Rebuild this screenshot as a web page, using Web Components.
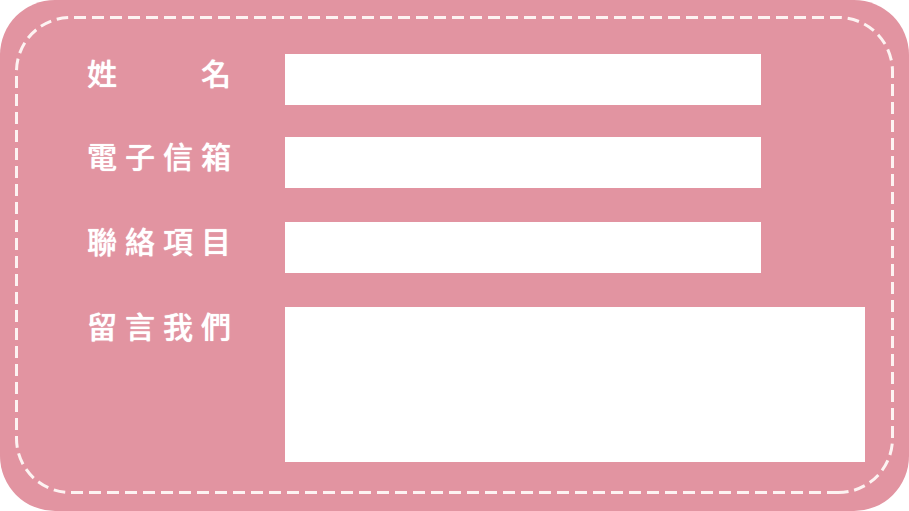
<!DOCTYPE html>
<html lang="zh-Hant">
<head>
<meta charset="utf-8">
<meta name="viewport" content="width=device-width, initial-scale=1">
<title>聯絡我們</title>
<style>
  body {
    margin: 0;
    background: #fff;
    color: #fff;
    font-family: "Noto Sans CJK TC", "Noto Sans", sans-serif;
  }
</style>
</head>
<body>
<contact-card>
  <field-group>
    <form-field label="姓 名" name="name"></form-field>
    <form-field label="電子信箱" name="email" type="email"></form-field>
  </field-group>
  <form-field label="聯絡項目" name="subject"></form-field>
  <form-field label="留言我們" name="message" multiline></form-field>
</contact-card>

<template id="contact-card">
  <style>
    :host {
      display: block;
      position: relative;
      box-sizing: border-box;
      padding: 54px 44px 49px 87px;
      border-radius: 55px;
      background: #e294a1;
    }
    stitched-border { position: absolute; inset: 16px 15px 17px; }
    form { position: relative; display: flex; flex-direction: column; gap: 34px; margin: 0; }
  </style>
  <stitched-border></stitched-border>
  <form><slot></slot></form>
</template>

<!-- Four straight runs of stitches between four curved corners, 12px stitch and 6px gap. -->
<template id="stitched-border">
  <style>
    :host {
      --thread: #fdf3f2;
      display: grid;
      grid-template: 56px 1fr 56px / 56px 1fr 56px;
      pointer-events: none;
    }
    svg { display: block; width: 56px; height: 56px; }
    path { fill: none; stroke: var(--thread); stroke-width: 3px; stroke-dasharray: 12 6; }
    .top { background: repeating-linear-gradient(90deg, transparent 0 3px, var(--thread) 3px 15px, transparent 15px 18px) top / 100% 3px no-repeat; }
    .bottom { background: repeating-linear-gradient(90deg, var(--thread) 0 12px, transparent 12px 18px) bottom / 100% 3px no-repeat; }
    .left { background: repeating-linear-gradient(180deg, transparent 0 4px, var(--thread) 4px 16px, transparent 16px 18px) left / 3px 100% no-repeat; }
    .right { background: repeating-linear-gradient(180deg, var(--thread) 0 6px, transparent 6px 12px, var(--thread) 12px 18px) right / 3px 100% no-repeat; }
  </style>
  <svg viewBox="0 0 56 56" aria-hidden="true"><path pathLength="89" stroke-dashoffset="16" d="M1.5 56V55.5A54 54 0 0 1 55.5 1.5H56"/></svg>
  <div class="top"></div>
  <svg viewBox="0 0 56 56" aria-hidden="true"><path pathLength="88" stroke-dashoffset="8" d="M0 1.5H.5A54 54 0 0 1 54.5 55.5V56"/></svg>
  <div class="left"></div>
  <div></div>
  <div class="right"></div>
  <svg viewBox="0 0 56 56" aria-hidden="true"><path pathLength="88" stroke-dashoffset="12" d="M56 54.5H55.5A54 54 0 0 1 1.5 .5V0"/></svg>
  <div class="bottom"></div>
  <svg viewBox="0 0 56 56" aria-hidden="true"><path pathLength="89" stroke-dashoffset="12" d="M54.5 0V.5A54 54 0 0 1 .5 54.5H0"/></svg>
</template>

<template id="field-group">
  <style>
    :host { display: flex; flex-direction: column; gap: 32px; }
  </style>
  <slot></slot>
</template>

<template id="form-field">
  <style>
    :host { display: grid; grid-template-columns: 144px minmax(0, 1fr); column-gap: 54px; align-items: start; }
    label {
      font-size: 30px;
      font-weight: 500;
      text-shadow: 0 0 1px currentColor;
      line-height: 36px;
      text-align: justify;
      text-align-last: justify;
      white-space: nowrap;
    }
    input, textarea {
      display: block;
      box-sizing: border-box;
      margin: 0;
      padding: 8px 12px;
      border: 0;
      border-radius: 0;
      background: #fff;
      color: #333;
      font: inherit;
      font-size: 20px;
    }
    input { width: 82%; height: 51px; }
    textarea { width: 100%; height: 155px; resize: none; }
  </style>
  <label for="control"></label>
</template>

<script>
  const stamp = (host, id) => {
    const root = host.attachShadow({ mode: "open" });
    root.append(document.getElementById(id).content.cloneNode(true));
    return root;
  };

  customElements.define("stitched-border", class extends HTMLElement {
    constructor() { super(); stamp(this, "stitched-border"); }
  });

  customElements.define("field-group", class extends HTMLElement {
    constructor() { super(); stamp(this, "field-group"); }
  });

  customElements.define("form-field", class extends HTMLElement {
    connectedCallback() {
      if (this.shadowRoot) return;
      const root = stamp(this, "form-field");
      const multiline = this.hasAttribute("multiline");
      const control = document.createElement(multiline ? "textarea" : "input");
      if (!multiline) control.type = this.getAttribute("type") || "text";
      control.id = "control";
      control.name = this.getAttribute("name");
      root.querySelector("label").textContent = this.getAttribute("label");
      root.append(control);
    }
  });

  customElements.define("contact-card", class extends HTMLElement {
    constructor() { super(); stamp(this, "contact-card"); }
  });
</script>
</body>
</html>
